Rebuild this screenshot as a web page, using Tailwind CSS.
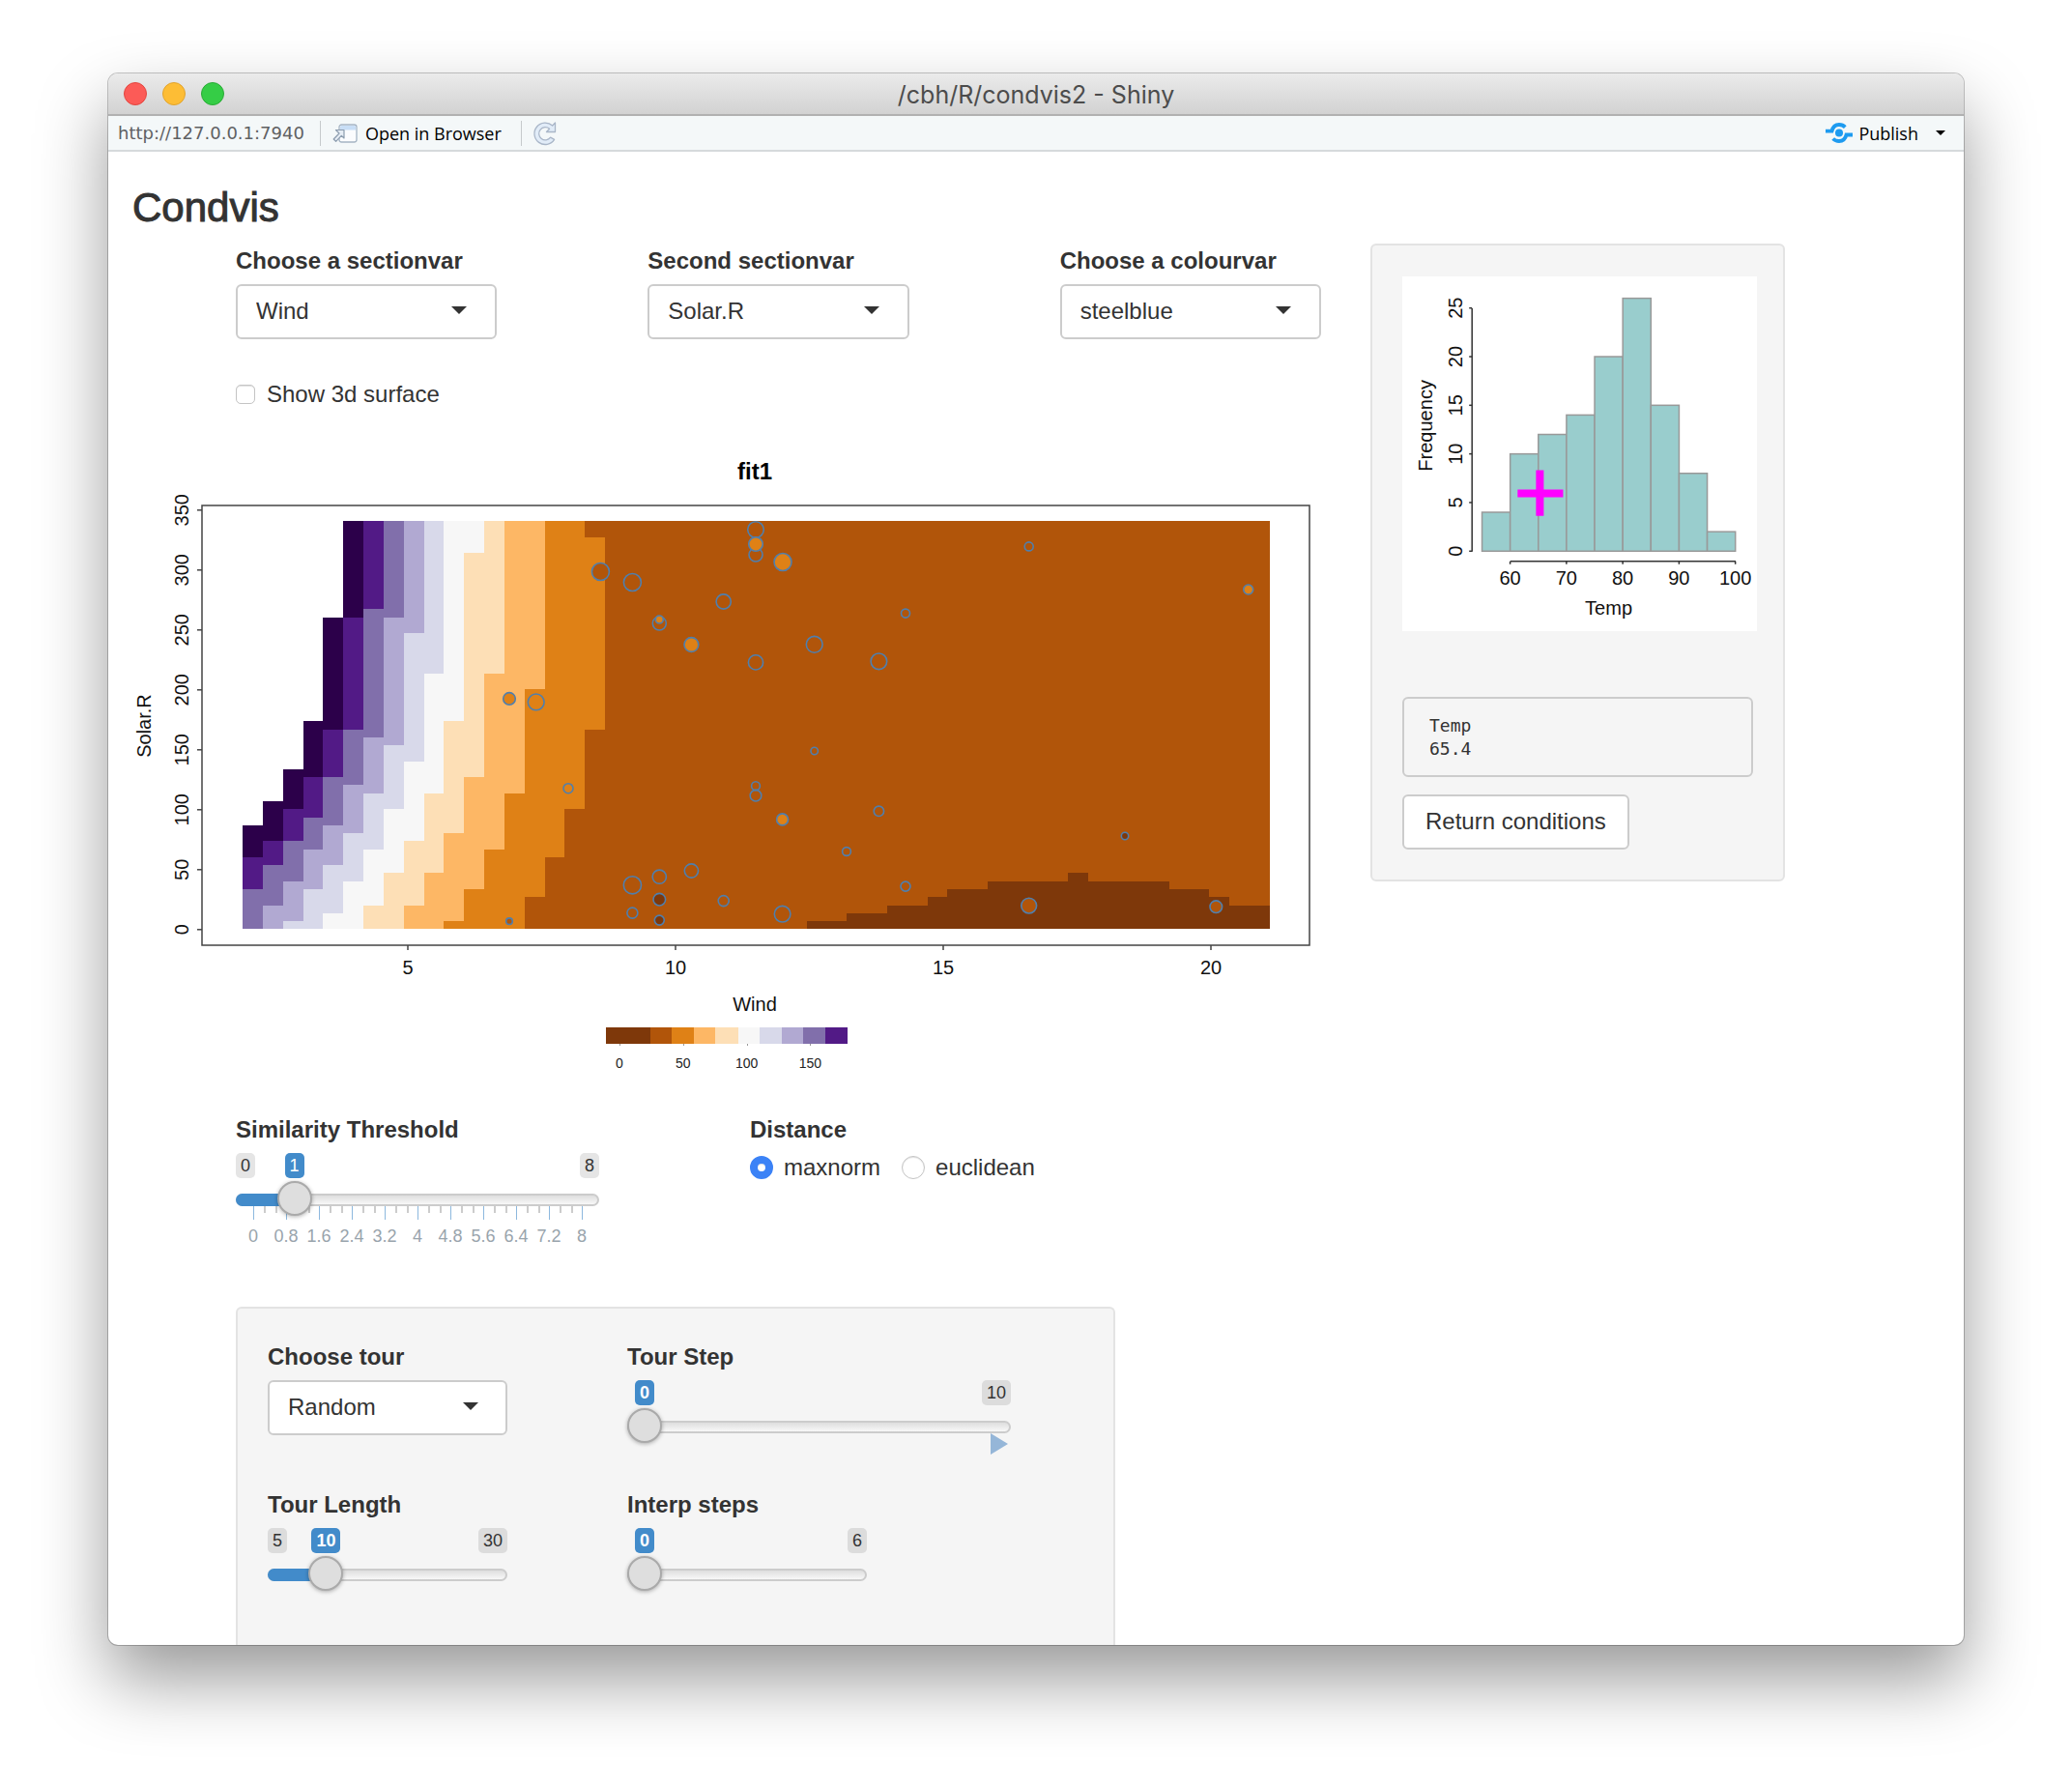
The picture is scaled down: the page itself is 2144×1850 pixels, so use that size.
<!DOCTYPE html>
<html lang="en">
<head>
<meta charset="utf-8">
<title>/cbh/R/condvis2 - Shiny</title>
<script src="https://cdn.jsdelivr.net/npm/@tailwindcss/browser@4"></script>
</head>
<body class="min-h-screen bg-white px-28 pt-[76px] pb-[148px] font-['Liberation_Sans',Arial,sans-serif] text-2xl leading-[34px] text-[#333]">

<div class="overflow-hidden rounded-[10px] bg-white shadow-[0_0_0_1px_rgba(0,0,0,0.22),0_36px_72px_rgba(0,0,0,0.4)]">

  <!-- Title bar -->
  <header class="grid h-11 grid-cols-[1fr_auto_1fr] items-center border-b-2 border-[#b1b1b1] bg-linear-to-b from-[#ebebeb] to-[#d2d2d2] px-4">
    <div class="flex gap-4">
      <button type="button" aria-label="Close" class="size-6 rounded-full border border-[#e2463f] bg-[#fc5b57]"></button>
      <button type="button" aria-label="Minimise" class="size-6 rounded-full border border-[#e0a32e] bg-[#fdbd35]"></button>
      <button type="button" aria-label="Zoom" class="size-6 rounded-full border border-[#2aab37] bg-[#35cd46]"></button>
    </div>
    <h1 class="pt-[2px] font-['Inter',sans-serif] text-[25px] leading-8 text-[#4c4c4c]">/cbh/R/condvis2 - Shiny</h1>
  </header>

  <!-- Toolbar -->
  <nav class="flex h-[37px] items-center border-b-2 border-[#d6dadc] bg-[#f4f8f9] pr-[19px] pl-[10px] font-['Open_Sans',sans-serif] text-lg leading-6 font-medium text-black">
    <span class="font-['DejaVu_Sans',sans-serif] font-normal text-[#5f6163]">http://127.0.0.1:7940</span>
    <span class="ml-4 h-[26px] w-px bg-[#c6cacc]"></span>
    <button type="button" class="ml-3 flex items-center gap-2">
      <svg class="h-5 w-[26px]" viewBox="0 0 26 20" fill="none" aria-hidden="true">
        <rect x="7" y="1" width="18" height="18" rx="2.5" fill="#fbfcfe" stroke="#a5b4c4" stroke-width="1.3"/>
        <path d="M8 6.500V3.500Q8 2 9.500 2H22.500Q24.200 2 24.200 3.500V6.500Z" fill="#c8def6"/>
        <path d="M3.500 6.500H12V15L9.300 12.400 3.600 18.300 1.200 16 7 10Z" fill="#e6edf5" stroke="#8c9cae" stroke-width="1.2" stroke-linejoin="round"/>
      </svg>
      Open in Browser
    </button>
    <span class="ml-5 h-[26px] w-px bg-[#c6cacc]"></span>
    <button type="button" aria-label="Reload" class="ml-[11px]">
      <svg class="size-[26px]" viewBox="0 0 26 26" fill="#e1ecf8" stroke="#a9b6c8" stroke-width="1.3" stroke-linejoin="round" aria-hidden="true">
        <path d="M23.500 2V11.500H14.500L17.600 8.300A6.600 6.600 0 1 0 18.600 17.200L22.600 19.300A11.200 11.200 0 1 1 20.700 5Z"/>
      </svg>
    </button>
    <button type="button" class="ml-auto flex items-center">
      <svg class="mr-[6px] h-[21px] w-7" viewBox="0 0 28 21" fill="none" stroke="#1e9bf0" stroke-width="3.800" aria-hidden="true">
        <path d="M0 8.700H6.500C7.500 4.500 10.500 2 14 2C16.500 2 18.700 2.900 20.300 4.600"/>
        <path d="M28 12.500H21.500C20.500 16.700 17.500 19 14 19C11.500 19 9.300 18.200 7.700 16.500"/>
        <circle cx="14" cy="10.500" r="4" fill="#1e9bf0" stroke="none"/>
      </svg>
      Publish
      <svg class="ml-[18px] h-[5px] w-[10px]" viewBox="0 0 10 5" aria-hidden="true"><path d="M0 0H10L5 5Z"/></svg>
    </button>
  </nav>

  <main class="pl-[25px]">
    <h2 class="pt-[35px] pb-[14px] text-[42px] leading-[46px] [-webkit-text-stroke:1px_#333]">Condvis</h2>

    <div class="grid grid-cols-[minmax(0,1281fr)_minmax(0,429fr)_minmax(0,185fr)] items-start">

      <!-- Section plot and its controls -->
      <section>
        <div class="grid grid-cols-3 gap-x-[156px] pr-[51px] pl-[107px]">
          <div>
            <label for="sectionvar" class="mb-[6px] block leading-9 font-bold">Choose a sectionvar</label>
            <div class="relative">
              <select id="sectionvar" class="block h-[57px] w-full appearance-none rounded-md border-2 border-[#ccc] bg-white pb-[2px] pl-[19px]"><option>Wind</option><option>Solar.R</option><option>Temp</option></select>
              <svg class="pointer-events-none absolute top-[23px] right-[31px] h-2 w-4" viewBox="0 0 16 8" fill="#333" aria-hidden="true"><path d="M0 0H16L8 8Z"/></svg>
            </div>
          </div>
          <div>
            <label for="sectionvar2" class="mb-[6px] block leading-9 font-bold">Second sectionvar</label>
            <div class="relative">
              <select id="sectionvar2" class="block h-[57px] w-full appearance-none rounded-md border-2 border-[#ccc] bg-white pb-[2px] pl-[19px]"><option>Solar.R</option><option>Temp</option></select>
              <svg class="pointer-events-none absolute top-[23px] right-[31px] h-2 w-4" viewBox="0 0 16 8" fill="#333" aria-hidden="true"><path d="M0 0H16L8 8Z"/></svg>
            </div>
          </div>
          <div>
            <label for="colourvar" class="mb-[6px] block leading-9 font-bold">Choose a colourvar</label>
            <div class="relative">
              <select id="colourvar" class="block h-[57px] w-full appearance-none rounded-md border-2 border-[#ccc] bg-white pb-[2px] pl-[19px]"><option>steelblue</option><option>Wind</option></select>
              <svg class="pointer-events-none absolute top-[23px] right-[31px] h-2 w-4" viewBox="0 0 16 8" fill="#333" aria-hidden="true"><path d="M0 0H16L8 8Z"/></svg>
            </div>
          </div>
        </div>

        <label class="mt-10 ml-[107px] flex w-fit items-center gap-3">
          <input type="checkbox" class="size-5 appearance-none rounded-[5px] border border-[#c4c4c4] bg-white shadow-[inset_0_1px_1px_rgba(0,0,0,0.12)] checked:bg-[#3b82f6]">
          Show 3d surface
        </label>

        <svg id="section-plot" class="mt-[15px] block h-auto w-full" viewBox="137 440 1281 680" font-size="20" text-anchor="middle" role="img" aria-label="Section plot of fit1">
          <text x="781" y="496" font-size="24" font-weight="bold" fill="#000">fit1</text>
          <g id="cells" shape-rendering="crispEdges"></g>
          <g id="points" stroke="#4f7fae" stroke-width="1.600" fill="none"></g>
          <g id="axes" fill="none" stroke="#444" stroke-width="1.500"><rect x="209" y="523" width="1146" height="455"/></g>
          <g id="labels" fill="#111">
            <text x="781" y="1046">Wind</text>
            <text transform="translate(156 751) rotate(-90)">Solar.R</text>
          </g>
          <g id="key" shape-rendering="crispEdges"></g>
          <g id="key-labels" fill="#222" font-size="14"></g>
        </svg>

        <div class="mt-[31px] ml-[107px] grid grid-cols-[376px_1fr] gap-x-[156px]">
          <div>
            <label for="threshold" class="mb-[6px] block leading-9 font-bold">Similarity Threshold</label>
            <div class="relative">
              <div class="flex justify-between text-lg leading-[26px]">
                <span class="rounded-[5px] bg-[#e5e5e5] px-[5px]">0</span>
                <span class="rounded-[5px] bg-[#e5e5e5] px-[5px]">8</span>
              </div>
              <output for="threshold" class="absolute top-0 -translate-x-1/2 rounded-[5px] bg-[#428bca] px-[5px] text-lg leading-[26px] text-white" style="left:calc(18px + (100% - 36px) * 0.125)">1</output>
              <div class="relative z-10 mt-[3px] h-9">
                <div class="absolute inset-x-0 top-[13px] h-[13px] rounded-full border-2 border-[#ccc] bg-linear-to-b from-[#dedede] to-[#f8f8f8]"></div>
                <div class="absolute top-[13px] left-0 h-[13px] rounded-l-full bg-[#428bca]" style="width:calc(18px + (100% - 36px) * 0.125)"></div>
                <input id="threshold" type="range" min="0" max="8" step="0.2" value="1" class="relative block h-9 w-full appearance-none bg-transparent [&::-webkit-slider-thumb]:size-9 [&::-webkit-slider-thumb]:appearance-none [&::-webkit-slider-thumb]:rounded-full [&::-webkit-slider-thumb]:border-2 [&::-webkit-slider-thumb]:border-[#aaa] [&::-webkit-slider-thumb]:bg-[#dedede] [&::-webkit-slider-thumb]:shadow-[0_1px_4px_rgba(0,0,0,0.3)]">
              </div>
              <svg id="ticks" class="-mt-[10px] block h-11 w-full" viewBox="0 0 376 44" font-size="18" text-anchor="middle" fill="#99a4ac" aria-hidden="true"></svg>
            </div>
          </div>
          <fieldset>
            <legend class="mb-1 leading-9 font-bold">Distance</legend>
            <div class="flex gap-[22px]">
              <label class="flex items-center gap-[11px]">
                <input type="radio" name="distance" checked class="size-6 appearance-none rounded-full border border-[#c4c4c4] bg-white shadow-[inset_0_1px_1px_rgba(0,0,0,0.12)] checked:border-[8px] checked:border-[#3b82f6]">
                maxnorm
              </label>
              <label class="flex items-center gap-[11px]">
                <input type="radio" name="distance" class="size-6 appearance-none rounded-full border border-[#c4c4c4] bg-white shadow-[inset_0_1px_1px_rgba(0,0,0,0.12)] checked:border-[8px] checked:border-[#3b82f6]">
                euclidean
              </label>
            </div>
          </fieldset>
        </div>

        <!-- Tour controls -->
        <div class="mt-[60px] mr-[264px] ml-[107px] grid grid-cols-[248fr_397fr] gap-x-[124px] gap-y-[46px] rounded-t-md border-2 border-b-0 border-[#e3e3e3] bg-[#f5f5f5] pt-8 pr-[106px] pb-14 pl-[31px]">
          <div>
            <label for="tour" class="mb-[6px] block leading-9 font-bold">Choose tour</label>
            <div class="relative">
              <select id="tour" class="block h-[57px] w-full appearance-none rounded-md border-2 border-[#ccc] bg-white pb-[2px] pl-[19px]"><option>Random</option><option>Kmeans</option></select>
              <svg class="pointer-events-none absolute top-[23px] right-[30px] h-2 w-4" viewBox="0 0 16 8" fill="#333" aria-hidden="true"><path d="M0 0H16L8 8Z"/></svg>
            </div>
          </div>
          <div>
            <label for="tourstep" class="mb-[6px] block leading-9 font-bold">Tour Step</label>
            <div class="relative">
              <div class="flex justify-end text-lg leading-[26px]">
                <span class="rounded-[5px] bg-[#dcdcdc] px-[5px]">10</span>
              </div>
              <output for="tourstep" class="absolute top-0 -translate-x-1/2 rounded-[5px] bg-[#428bca] px-[5px] text-lg leading-[26px] font-bold text-white" style="left:18px">0</output>
              <div class="relative mt-[3px] h-9">
                <div class="absolute inset-x-0 top-[13px] h-[13px] rounded-full border-2 border-[#ccc] bg-linear-to-b from-[#dedede] to-[#f8f8f8]"></div>
                <input id="tourstep" type="range" min="0" max="10" value="0" class="relative block h-9 w-full appearance-none bg-transparent [&::-webkit-slider-thumb]:size-9 [&::-webkit-slider-thumb]:appearance-none [&::-webkit-slider-thumb]:rounded-full [&::-webkit-slider-thumb]:border-2 [&::-webkit-slider-thumb]:border-[#aaa] [&::-webkit-slider-thumb]:bg-[#dedede] [&::-webkit-slider-thumb]:shadow-[0_1px_4px_rgba(0,0,0,0.3)]">
              </div>
              <button type="button" aria-label="Play" class="absolute top-[55px] right-[3px]">
                <svg class="block h-[22px] w-[18px]" viewBox="0 0 18 22" fill="#95b6d8" aria-hidden="true"><path d="M0 0L18 11 0 22Z"/></svg>
              </button>
            </div>
          </div>
          <div>
            <label for="tourlength" class="mb-[6px] block leading-9 font-bold">Tour Length</label>
            <div class="relative">
              <div class="flex justify-between text-lg leading-[26px]">
                <span class="rounded-[5px] bg-[#dcdcdc] px-[5px]">5</span>
                <span class="rounded-[5px] bg-[#dcdcdc] px-[5px]">30</span>
              </div>
              <output for="tourlength" class="absolute top-0 -translate-x-1/2 rounded-[5px] bg-[#428bca] px-[5px] text-lg leading-[26px] font-bold text-white" style="left:calc(18px + (100% - 36px) * 0.2)">10</output>
              <div class="relative mt-[3px] h-9">
                <div class="absolute inset-x-0 top-[13px] h-[13px] rounded-full border-2 border-[#ccc] bg-linear-to-b from-[#dedede] to-[#f8f8f8]"></div>
                <div class="absolute top-[13px] left-0 h-[13px] rounded-l-full bg-[#428bca]" style="width:calc(18px + (100% - 36px) * 0.2)"></div>
                <input id="tourlength" type="range" min="5" max="30" value="10" class="relative block h-9 w-full appearance-none bg-transparent [&::-webkit-slider-thumb]:size-9 [&::-webkit-slider-thumb]:appearance-none [&::-webkit-slider-thumb]:rounded-full [&::-webkit-slider-thumb]:border-2 [&::-webkit-slider-thumb]:border-[#aaa] [&::-webkit-slider-thumb]:bg-[#dedede] [&::-webkit-slider-thumb]:shadow-[0_1px_4px_rgba(0,0,0,0.3)]">
              </div>
            </div>
          </div>
          <div class="w-5/8">
            <label for="interp" class="mb-[6px] block leading-9 font-bold">Interp steps</label>
            <div class="relative">
              <div class="flex justify-end text-lg leading-[26px]">
                <span class="rounded-[5px] bg-[#dcdcdc] px-[5px]">6</span>
              </div>
              <output for="interp" class="absolute top-0 -translate-x-1/2 rounded-[5px] bg-[#428bca] px-[5px] text-lg leading-[26px] font-bold text-white" style="left:18px">0</output>
              <div class="relative mt-[3px] h-9">
                <div class="absolute inset-x-0 top-[13px] h-[13px] rounded-full border-2 border-[#ccc] bg-linear-to-b from-[#dedede] to-[#f8f8f8]"></div>
                <input id="interp" type="range" min="0" max="6" value="0" class="relative block h-9 w-full appearance-none bg-transparent [&::-webkit-slider-thumb]:size-9 [&::-webkit-slider-thumb]:appearance-none [&::-webkit-slider-thumb]:rounded-full [&::-webkit-slider-thumb]:border-2 [&::-webkit-slider-thumb]:border-[#aaa] [&::-webkit-slider-thumb]:bg-[#dedede] [&::-webkit-slider-thumb]:shadow-[0_1px_4px_rgba(0,0,0,0.3)]">
              </div>
            </div>
          </div>
        </div>
      </section>

      <!-- Condition selector -->
      <aside class="rounded-md border-2 border-[#e3e3e3] bg-[#f5f5f5] px-[31px] pt-8 pb-[31px]">
        <div class="-mr-1">
          <svg id="histogram" class="block h-auto w-full bg-white" viewBox="0 0 366 366" font-size="20" text-anchor="middle" role="img" aria-label="Histogram of Temp">
            <g id="bars" fill="#99cdcd" stroke="#999" stroke-width="1.500"></g>
            <g id="hist-axes" stroke="#333" stroke-width="1.500"></g>
            <g id="hist-labels" fill="#111">
              <text x="213" y="349">Temp</text>
              <text transform="translate(31 154) rotate(-90)">Frequency</text>
            </g>
            <path d="M119 220H138V200H146V220H166V228H146V247H138V228H119Z" fill="#f0f"/>
          </svg>
        </div>
        <pre class="mt-[68px] rounded-md border-2 border-[#ccc] px-[26px] pt-4 pb-[15px] font-['DejaVu_Sans_Mono',monospace] text-lg leading-6">Temp
65.4</pre>
        <button type="button" class="mt-[18px] block h-[57px] rounded-md border-2 border-[#ccc] bg-white px-[22px] pb-[2px]">Return conditions</button>
      </aside>
    </div>
  </main>
</div>

<script>
const NS = 'http://www.w3.org/2000/svg';
function add(id, tag, attrs, text) {
  const el = document.createElementNS(NS, tag);
  for (const k in attrs) el.setAttribute(k, attrs[k]);
  if (text !== undefined) el.textContent = text;
  document.getElementById(id).appendChild(el);
}

const pal = ['#7e380a', '#b1550a', '#df8116', '#fdb765', '#fddfb6', '#f7f7f7', '#d8d9ea', '#b1a9d2', '#816fab', '#521a86', '#2c004a'];

// Prediction surface: 51 x 51 cells. Each column lists [colour, top row] from the bottom up.
const columns = [
  [[8,5],[9,9],[10,13]],
  [[7,3],[8,8],[9,11],[10,16]],
  [[6,1],[7,6],[8,11],[9,15],[10,20]],
  [[6,5],[7,10],[8,14],[9,19],[10,26]],
  [[5,2],[6,8],[7,13],[8,19],[9,25],[10,39]],
  [[5,6],[6,12],[7,18],[8,25],[9,39],[10,51]],
  [[4,3],[5,10],[6,17],[7,24],[8,40],[9,51]],
  [[4,7],[5,15],[6,23],[7,39],[8,51]],
  [[3,3],[4,11],[5,21],[6,37],[7,51]],
  [[3,7],[4,17],[5,32],[6,51]],
  [[2,1],[3,12],[4,26],[5,51]],
  [[2,5],[3,19],[4,47],[5,51]],
  [[2,10],[3,32],[4,51]],
  [[2,17],[3,51]],
  [[1,4],[2,30],[3,51]],
  [[1,9],[2,51]],
  [[1,15],[2,51]],
  [[1,25],[2,49],[1,51]]
];
const cx = i => Math.round(251 + i * 20.84), cy = k => Math.round(961.4 - k * 8.276);
function cell(i0, i1, k0, k1, c) {
  add('cells', 'rect', {x: cx(i0), y: cy(k1), width: cx(i1) - cx(i0), height: cy(k0) - cy(k1), fill: pal[c]});
}
columns.forEach((bands, i) => {
  let k = 0;
  for (const [c, top] of bands) { cell(i, i + 1, k, top, c); k = top; }
});
cell(18, 51, 0, 51, 1);
[[28,30,1],[30,32,2],[32,34,3],[34,35,4],[35,37,5],[37,41,6],[41,42,7],[42,46,6],[46,48,5],[48,49,4],[49,51,3]]
  .forEach(([a, b, k]) => cell(a, b, 0, k, 0));

// Observations: x, y, radius, fill colour index
[[782,548,8.3],[782,574,7],[782,563,7.3,2],[810,581.5,9,2],[621.4,591.5,9,1],[654.4,602.5,9],[748.7,622.5,7.6],
 [682.3,645,7],[682.3,641,4,2],[715.4,667,7.4,2],[937,634.6,4.5],[842.7,666.8,8.4],[909.4,684.3,8.3],[782,685.4,7.6],
 [842.7,777,3.7],[588,815.7,5],[782,813.2,4.4],[782,823.2,5.8],[809.6,847.9,6,2],[909.4,839.3,5.2],[876,881,4.4],
 [715.4,901,7.1],[682.3,907.2,7.1],[654.4,915.8,9.1],[937,917.1,5],[682.3,930.7,6.3,0],[748.7,932.1,5.5],
 [654.4,944.6,5.5],[809.6,945.7,8.3],[682.3,952.1,5,0],[1064.7,565.4,4.5],[1291.7,610,5,2],[1164,865,3.7,0],
 [1064.7,937.1,7.9,1],[1258.3,938.2,6.3,1],[527,722.9,6.3,2],[554.7,726.4,8.4],[527,953.2,3.3,1]
].forEach(([x, y, r, c]) => add('points', 'circle', {cx: x, cy: y, r, fill: c === undefined ? 'none' : pal[c]}));

for (let v = 0; v <= 350; v += 50) {
  const y = 961.8 - v * 1.24;
  add('axes', 'path', {d: `M204 ${y}H209`});
  add('labels', 'text', {transform: `translate(195 ${y}) rotate(-90)`}, v);
}
for (let v = 5; v <= 20; v += 5) {
  const x = 145 + v * 55.4;
  add('axes', 'path', {d: `M${x} 978V983`});
  add('labels', 'text', {x, y: 1008}, v);
}

// Colour key
const edges = [627, 673, 695, 718, 740, 764, 786, 809, 831, 854, 877];
for (let i = 0; i < 10; i++) add('key', 'rect', {x: edges[i], y: 1063, width: edges[i + 1] - edges[i], height: 17, fill: pal[i]});
[0, 50, 100, 150].forEach(v => {
  const x = 641 + v * 1.316;
  add('key', 'rect', {x, y: 1080, width: 1, height: 2, fill: '#999'});
  add('key-labels', 'text', {x, y: 1105}, v);
});

// Slider scale
for (let i = 0; i <= 30; i++) {
  const x = 18 + i * 340 / 30, major = i % 3 === 0;
  add('ticks', 'rect', {x: Math.round(x), y: 0, width: major ? 1 : 2, height: major ? 14 : 7, fill: major ? '#8db8de' : '#ccc'});
  if (major) add('ticks', 'text', {x, y: 37}, +(i / 3 * 0.8).toFixed(1));
}

// Histogram
[4, 10, 12, 14, 20, 26, 15, 8, 2].forEach((n, i) =>
  add('bars', 'rect', {x: 82.3 + i * 29.05, y: 283.5 - n * 10.036, width: 29.05, height: n * 10.036}));
add('hist-axes', 'path', {d: 'M72 33V284M111.500 294H344'});
for (let v = 0; v <= 25; v += 5) {
  const y = 283.5 - v * 10.036;
  add('hist-axes', 'path', {d: `M69 ${y}H72`});
  add('hist-labels', 'text', {transform: `translate(62 ${y}) rotate(-90)`}, v);
}
for (let v = 60; v <= 100; v += 10) {
  const x = 111.300 + (v - 60) * 5.81;
  add('hist-axes', 'path', {d: `M${x} 294V297`});
  add('hist-labels', 'text', {x, y: 318}, v);
}
</script>
</body>
</html>
